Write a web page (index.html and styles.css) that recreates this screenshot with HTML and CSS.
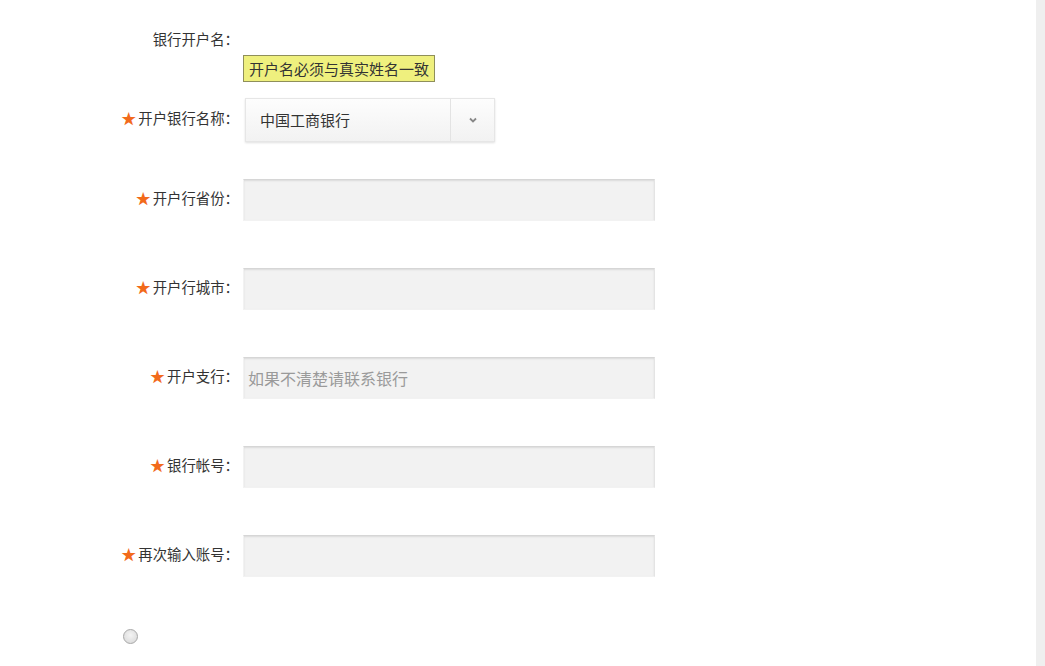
FILE: index.html
```html
<!DOCTYPE html>
<html lang="zh-CN">
<head>
<meta charset="utf-8">
<title>银行信息</title>
<link rel="stylesheet" href="styles.css">
</head>
<body>
<div class="page">
  <main class="form">
    <div class="row row-name">
      <label class="label">银行开户名：</label>
    </div>
    <div class="tip-row">
      <span class="tip">开户名必须与真实姓名一致</span>
    </div>
    <div class="row row-select">
      <label class="label"><span class="star">★</span>开户银行名称：</label>
      <div class="select">
        <span class="select-text">中国工商银行</span>
        <span class="select-btn">
          <svg width="8" height="6" viewBox="0 0 8 6"><path d="M1 1.5 L4 4.5 L7 1.5" fill="none" stroke="#888" stroke-width="1.8"/></svg>
        </span>
      </div>
    </div>
    <div class="row row-input">
      <label class="label"><span class="star">★</span>开户行省份：</label>
      <input class="input" type="text">
    </div>
    <div class="row row-input">
      <label class="label"><span class="star">★</span>开户行城市：</label>
      <input class="input" type="text">
    </div>
    <div class="row row-input">
      <label class="label"><span class="star">★</span>开户支行：</label>
      <input class="input" type="text" placeholder="如果不清楚请联系银行">
    </div>
    <div class="row row-input">
      <label class="label"><span class="star">★</span>银行帐号：</label>
      <input class="input" type="text">
    </div>
    <div class="row row-input">
      <label class="label"><span class="star">★</span>再次输入账号：</label>
      <input class="input" type="text">
    </div>
    <div class="radio-row">
      <span class="radio"></span>
    </div>
  </main>
  <aside class="gutter"></aside>
</div>
</body>
</html>
```
FILE: styles.css
```css
html, body {
  margin: 0;
  padding: 0;
  background: #fff;
}
body {
  font-family: "Noto Sans CJK SC", "Liberation Sans", sans-serif;
  color: #333;
  font-size: 14px;
}
.page {
  display: flex;
  min-height: 100vh;
  height: 666px;
  overflow: hidden;
}
.form {
  flex: 1;
}
.gutter {
  width: 9px;
  background: #efefef;
}
.row {
  display: flex;
  align-items: center;
}
.label {
  width: 239px;
  text-align: right;
  font-size: 14.4px;
  line-height: 20px;
  color: #333;
  flex: none;
  white-space: nowrap;
}
.row-input .label,
.row-select .label {
  padding-bottom: 4px;
}
.star {
  color: #f26a1b;
  font-size: 15px;
  margin-right: 2px;
}
.row-name {
  padding-top: 29px;
}
.tip-row {
  padding-left: 243px;
  margin-top: 6px;
  display: flex;
}
.tip {
  display: inline-block;
  height: 25px;
  line-height: 25px;
  padding: 0 5px;
  background: #eff07e;
  border: 1px solid #8f8f5a;
  font-size: 15px;
  color: #333;
}
.row-select {
  margin-top: 16px;
}
.select {
  margin-left: 6px;
  width: 248px;
  height: 42px;
  display: flex;
  border: 1px solid #e6e6e6;
  background: linear-gradient(#fdfdfd, #f2f2f2);
  box-shadow: 0 1px 2px rgba(0, 0, 0, 0.12);
  box-sizing: content-box;
}
.select-text {
  flex: 1;
  padding-left: 14px;
  line-height: 42px;
  font-size: 15px;
  color: #333;
}
.select-btn {
  width: 43px;
  border-left: 1px solid #e3e3e3;
  display: flex;
  align-items: center;
  justify-content: center;
}
.row-input {
  margin-top: 37px;
}
.row-input + .row-input {
  margin-top: 47px;
}
.input {
  margin: 0 0 0 4px;
  width: 412px;
  height: 42px;
  box-sizing: border-box;
  border: 1px solid #f2f2f2;
  border-top-color: #d6d6d6;
  border-right-color: #e4e4e4;
  background: #f2f2f2;
  box-shadow: inset 0 1px 2px rgba(0, 0, 0, 0.1);
  padding: 0 4px;
  font-family: "Noto Sans CJK SC", "Liberation Sans", sans-serif;
  font-size: 16px;
  color: #333;
  outline: none;
}
.input::placeholder {
  color: #9a9a9a;
}
.radio-row {
  padding-left: 123px;
  margin-top: 52px;
}
.radio {
  display: block;
  width: 13px;
  height: 13px;
  border-radius: 50%;
  border: 1px solid #a8a8a8;
  background: radial-gradient(circle at 50% 40%, #f4f4f4, #d6d6d6);
}
```
